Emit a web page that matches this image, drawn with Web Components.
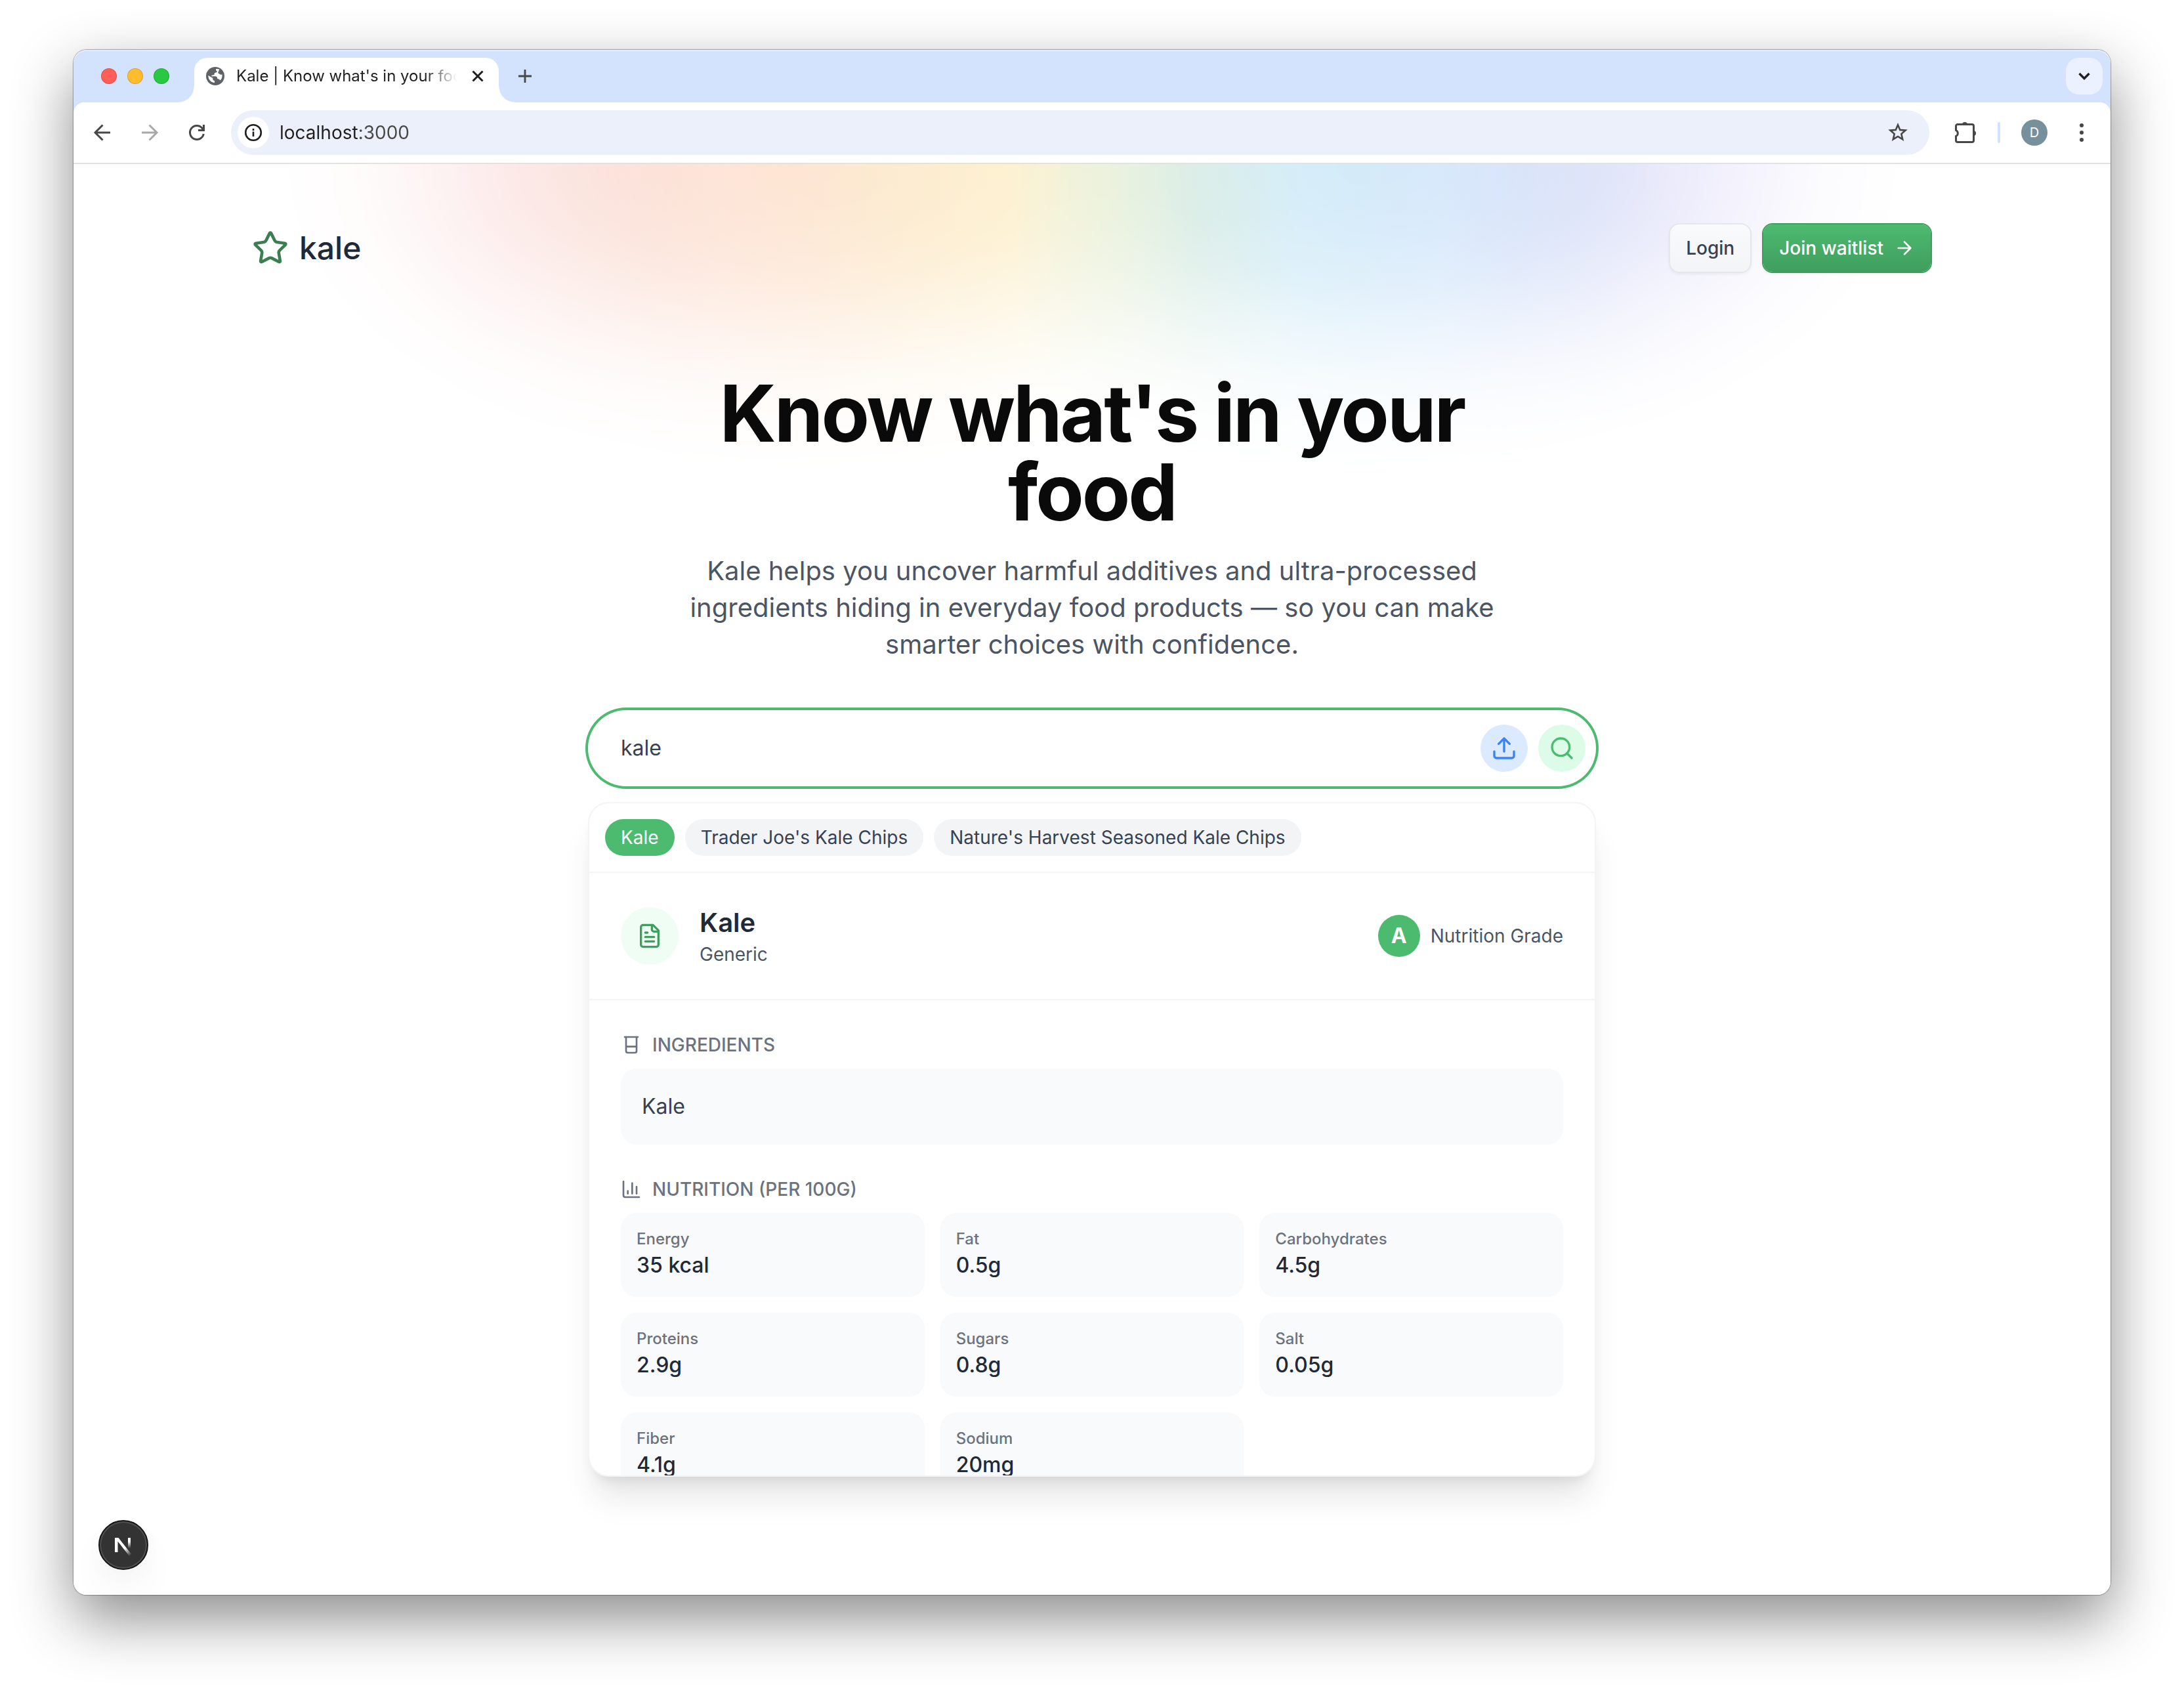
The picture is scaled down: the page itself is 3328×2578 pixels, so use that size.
<!DOCTYPE html>
<html lang="en">
<head>
<meta charset="utf-8">
<title>Kale | Know what's in your food</title>
<style>
  html, body { margin: 0; background: #fff; }
  body { font-family: Inter, "Liberation Sans", sans-serif; color: #1f2937; }
</style>
</head>
<body>
<browser-window>
  <tab-strip slot="tabs">Kale | Know what's in your food</tab-strip>
  <browser-toolbar slot="toolbar" url="localhost:3000" initial="D"></browser-toolbar>
  <kale-page></kale-page>
</browser-window>

<script>
const define = (name, html, setup) => {
  const template = document.createElement('template');
  template.innerHTML = html;
  customElements.define(name, class extends HTMLElement {
    constructor() {
      super();
      this.attachShadow({ mode: 'open' }).append(template.content.cloneNode(true));
    }
    connectedCallback() {
      if (setup) setup(this, this.shadowRoot);
    }
  });
};

const line = (body, width = 2) =>
  `<svg viewBox="0 0 24 24" fill="none" stroke="currentColor" stroke-width="${width}" stroke-linecap="round" stroke-linejoin="round">${body}</svg>`;
const sharp = (size, body, width) =>
  `<svg viewBox="0 0 ${size} ${size}" fill="none" stroke="currentColor" stroke-width="${width}">${body}</svg>`;

const ICONS = {
  star: line('<path d="M11.525 2.295a.53.53 0 0 1 .95 0l2.31 4.679a2.123 2.123 0 0 0 1.595 1.16l5.166.756a.53.53 0 0 1 .294.904l-3.736 3.638a2.123 2.123 0 0 0-.611 1.878l.882 5.14a.53.53 0 0 1-.771.56l-4.618-2.428a2.122 2.122 0 0 0-1.973 0L6.396 21.01a.53.53 0 0 1-.77-.56l.881-5.139a2.122 2.122 0 0 0-.611-1.879L2.16 9.795a.53.53 0 0 1 .294-.906l5.165-.755a2.122 2.122 0 0 0 1.597-1.16z"/>'),
  arrow: line('<path d="M5 12h14M12 5l7 7-7 7"/>'),
  upload: line('<path d="M21 15v4a2 2 0 0 1-2 2H5a2 2 0 0 1-2-2v-4M17 8l-5-5-5 5M12 3v12"/>'),
  search: line('<circle cx="11" cy="11" r="8"/><path d="M21 21l-4.35-4.35"/>'),
  file: line('<path d="M15 2H6a2 2 0 0 0-2 2v16a2 2 0 0 0 2 2h12a2 2 0 0 0 2-2V7Z"/><path d="M14 2v4a2 2 0 0 0 2 2h4M10 9H8M16 13H8M16 17H8"/>'),
  beaker: line('<path d="M4.5 3h15M6 3v16a2 2 0 0 0 2 2h8a2 2 0 0 0 2-2V3M6 14h12"/>'),
  chart: line('<path d="M3 3v16a2 2 0 0 0 2 2h16M18 17V9M13 17V5M8 17v-3"/>'),
  back: sharp(32, '<path d="M28 16H6M16.5 4.5L5 16l11.5 11.5"/>', 3),
  forward: sharp(32, '<path d="M4 16h22M15.5 4.5L27 16l-11.5 11.5"/>', 3),
  reload: sharp(32, '<path d="M26.3 18A10.500 10.500 0 1 1 24 9.200l2 2.300"/><path d="M26.500 4v8.500H18"/>', 3),
  info: sharp(32, '<circle cx="16" cy="16" r="11.800"/><path d="M16 14.500v7.500M16 10v3"/>', 2.6),
  bookmark: sharp(32, '<path d="M16 4.200l3.300 7.700 8.300.7-6.300 5.500 1.900 8.100-7.200-4.300-7.200 4.300 1.900-8.100-6.300-5.500 8.300-.7z"/>', 2.6),
  puzzle: '<svg viewBox="0 0 36 36"><path d="M4.500 8a2.500 2.500 0 0 1 2.500-2.500h22a2.500 2.500 0 0 1 2.500 2.500v22a2.500 2.500 0 0 1-2.500 2.500H7A2.500 2.500 0 0 1 4.500 30v-6.500a5 5 0 0 0 0-9z" fill="none" stroke="currentColor" stroke-width="3"/><path d="M14 6a4 4 0 0 1 8 0zM31 15a4 4 0 0 1 0 8z" fill="currentColor"/></svg>',
  dots: '<svg viewBox="0 0 32 32" fill="currentColor"><circle cx="16" cy="5" r="3"/><circle cx="16" cy="16" r="3"/><circle cx="16" cy="27" r="3"/></svg>',
  chevron: sharp(32, '<path d="M8.500 12l7.500 7.500 7.500-7.500"/>', 3.4),
  close: sharp(32, '<path d="M8.500 8.500l15 15M23.500 8.500l-15 15"/>', 3),
  plus: sharp(32, '<path d="M16 6v20M6 16h20"/>', 2.8),
  globe: '<svg viewBox="0 0 28 28"><circle cx="14" cy="14" r="14" fill="#5f6368"/><path d="M15.500 3.500c-1 1-.500 2.500.800 3.200 1 .600.400 2-1.200 2.300-1.600.200-2.600.800-2.400 2.300.200 1.400-1.200 1.700-2.700 1.600-1.400 0-2 .800-1.600 1.800H14c1.800 0 3 1.200 3 2.600 0 1.300.800 1.600 2.200 1.600 1.200 0 1.400 1 2.100 2.200 2.200-1.800 3.300-4.400 3.300-7.200 0-.800-.100-1.500-.200-2.100-1.200.900-2.800.700-3.800-.500-.800-1-2.300-.600-2.400-2 0-1.200 1.200-1.500 1.200-2.900 0-1.300 1.200-1.800 1.200-2.200-1.500-.900-3.300-.900-5.100-.700zM3.400 13.400c-.200 4.700 2.600 9 7 10.700 1.100.400 1.900.500 2.600.500v-3.100c-1.700 0-2.700-1-2.700-2.700v-1.200z" fill="#fff" transform="translate(0 -.5)"/></svg>',
};

define('ui-icon', `
  <style>
    :host { display: block; flex: none; width: var(--icon-size, 32px); height: var(--icon-size, 32px); }
    svg { display: block; width: 100%; height: 100%; }
  </style>`,
  (el, root) => {
    if (!root.querySelector('svg')) root.innerHTML += ICONS[el.getAttribute('name')] || '';
  });

define('browser-window', `
  <style>
    :host { display: block; box-sizing: border-box; min-height: 100vh; padding: 76px 112px 148px; overflow: hidden; }
    .frame { display: flex; flex-direction: column; min-height: calc(100vh - 224px); border-radius: 20px; background: #fff;
      box-shadow: 0 0 1px 1px rgba(0,0,0,.3), 0 36px 92px rgba(0,0,0,.46); }
    .bar { border-radius: 20px 20px 0 0; background: #d3e2fd; box-shadow: inset 0 2px 0 rgba(255,255,255,.35); }
    .view { display: flex; flex: 1; flex-direction: column; border-radius: 0 0 20px 20px; overflow: hidden; }
  </style>
  <div class="frame">
    <div class="bar"><slot name="tabs"></slot><slot name="toolbar"></slot></div>
    <div class="view"><slot></slot></div>
  </div>`);

define('tab-strip', `
  <style>
    :host { display: flex; align-items: flex-end; height: 80px; padding: 0 12px 0 42px; }
    button { display: grid; place-items: center; padding: 0; border: 0; background: none; color: #1f1f1f; }
    .lights { display: flex; align-self: center; gap: 16px; margin-right: 38px; }
    .lights button { width: 24px; height: 24px; border-radius: 50%; background: var(--c); box-shadow: inset 0 0 0 1px rgba(0,0,0,.14); }
    .tab { position: relative; display: flex; align-items: center; box-sizing: border-box; width: 464px; height: 68px; padding: 0 16px 12px 18px; border-radius: 20px 20px 0 0; background: #fff; }
    .tab::before, .tab::after { content: ""; position: absolute; bottom: 0; width: 24px; height: 24px; }
    .tab::before { right: 100%; background: radial-gradient(circle at 0 0, transparent 23px, #fff 24px); }
    .tab::after { left: 100%; background: radial-gradient(circle at 100% 0, transparent 23px, #fff 24px); }
    .title { flex: 1; margin-left: 18px; overflow: hidden; white-space: nowrap; font-size: 24px; line-height: 32px; color: #1f1f1f;
      -webkit-mask: linear-gradient(90deg, #000 calc(100% - 48px), transparent); mask: linear-gradient(90deg, #000 calc(100% - 48px), transparent); }
    .tab button { margin-left: 16px; --icon-size: 32px; }
    .plus { align-self: center; margin-left: 24px; color: #474747; }
    .list { align-self: center; width: 56px; height: 56px; margin-left: auto; border-radius: 20px; background: #ebf1fe; }
    .fav { --icon-size: 28px; }
  </style>
  <div class="lights">
    <button aria-label="Close window" style="--c:#ff5f57"></button>
    <button aria-label="Minimize window" style="--c:#febc2e"></button>
    <button aria-label="Zoom window" style="--c:#28c840"></button>
  </div>
  <div class="tab">
    <ui-icon class="fav" name="globe"></ui-icon>
    <span class="title"><slot></slot></span>
    <button aria-label="Close tab"><ui-icon name="close"></ui-icon></button>
  </div>
  <button class="plus" aria-label="New tab"><ui-icon name="plus"></ui-icon></button>
  <button class="list" aria-label="Search tabs"><ui-icon name="chevron"></ui-icon></button>`);

define('browser-toolbar', `
  <style>
    :host { display: flex; align-items: center; box-sizing: border-box; height: 94px; padding: 0 28px; border-bottom: 2px solid #e1e3e1; border-radius: 16px 16px 0 0; background: #fff; color: #474747; }
    button { display: grid; place-items: center; padding: 0; border: 0; background: none; color: inherit; font: inherit; }
    .nav { display: flex; gap: 40px; }
    .nav [disabled] { color: #a9a9a9; }
    .address { display: flex; flex: 1; align-items: center; height: 68px; margin: 0 36px; padding: 0 32px 0 10px; border-radius: 34px; background: #ecf0fa; }
    .info { width: 48px; height: 48px; border-radius: 50%; background: #fff; color: #1f1f1f; }
    input { flex: 1; min-width: 0; margin: 0 16px; padding: 0; border: 0; outline: 0; font: 28px/36px Inter, "Liberation Sans", sans-serif; color: #1f1f1f;
      background: linear-gradient(90deg, #1f1f1f 122px, #474747 122px); -webkit-background-clip: text; background-clip: text; -webkit-text-fill-color: transparent; }
    .puzzle { --icon-size: 36px; }
    .rule { width: 4px; height: 32px; margin: 0 32px; border-radius: 2px; background: #d3e2fd; }
    .avatar { width: 40px; height: 40px; margin-right: 36px; border-radius: 50%; background: #78909c; color: #fff; font-size: 20px; }
  </style>
  <div class="nav">
    <button aria-label="Back"><ui-icon name="back"></ui-icon></button>
    <button aria-label="Forward" disabled><ui-icon name="forward"></ui-icon></button>
    <button aria-label="Reload"><ui-icon name="reload"></ui-icon></button>
  </div>
  <div class="address">
    <button class="info" aria-label="Site information"><ui-icon name="info"></ui-icon></button>
    <input type="text" aria-label="Address">
    <button aria-label="Bookmark"><ui-icon name="bookmark"></ui-icon></button>
  </div>
  <button class="puzzle" aria-label="Extensions"><ui-icon name="puzzle"></ui-icon></button>
  <span class="rule"></span>
  <button class="avatar"></button>
  <button aria-label="Menu"><ui-icon name="dots"></ui-icon></button>`,
  (el, root) => {
    root.querySelector('input').value = el.getAttribute('url');
    root.querySelector('.avatar').textContent = el.getAttribute('initial');
  });

define('kale-page', `
  <style>
    :host { position: relative; display: flex; flex: 1; flex-direction: column; padding: 90px 32px 0; background: #fff;
      --fade: #000, rgba(0,0,0,.96) 12%, rgba(0,0,0,.86) 26%, rgba(0,0,0,.7) 40%, rgba(0,0,0,.48) 53%, rgba(0,0,0,.24) 68%, rgba(0,0,0,.07) 84%, transparent; }
    .glow { position: absolute; inset: 0 0 auto; height: 480px;
      background: linear-gradient(90deg, #f8c8c8 19%, #f9d7ce 25%, #fde3d5 32%, #fde6d3 36%, #fcedc5 46%, #e2edd0 51%, #d2e9e1 55%, #d3ecf8 60%, #d6e8fb 67%, #cfd5f5 76%, #d0caf5 82%);
      -webkit-mask: radial-gradient(ellipse 26% 470px at 36% 0, var(--fade)), radial-gradient(ellipse 26% 470px at 64% 0, var(--fade));
      mask: radial-gradient(ellipse 26% 470px at 36% 0, var(--fade)), radial-gradient(ellipse 26% 470px at 64% 0, var(--fade)); }
    .content { position: relative; display: flex; flex-direction: column; width: 100%; max-width: 2560px; margin: 0 auto; }
    kale-hero { margin: 154px auto 72px; }
    food-search { margin-bottom: 24px; }
    dev-badge { position: absolute; left: 38px; bottom: 38px; }
  </style>
  <div class="glow"></div>
  <div class="content">
    <kale-header></kale-header>
    <kale-hero>
      <span slot="title">Know what's in your food</span>
      Kale helps you uncover harmful additives and ultra-processed ingredients hiding in everyday food products — so you can make smarter choices with confidence.
    </kale-hero>
    <food-search value="kale"></food-search>
    <food-result></food-result>
  </div>
  <dev-badge></dev-badge>`);

define('kale-header', `
  <style>
    :host { display: flex; align-items: center; justify-content: space-between; }
    a { display: flex; align-items: center; gap: 16px; color: #1f2937; text-decoration: none; font-size: 48px; font-weight: 500; line-height: 64px; }
    a ui-icon { --icon-size: 56px; color: #3b7f50; }
    nav { display: flex; gap: 16px; }
  </style>
  <a href="#home"><ui-icon name="star"></ui-icon>kale</a>
  <nav>
    <kale-button>Login</kale-button>
    <kale-button variant="primary">Join waitlist<ui-icon slot="end" name="arrow"></ui-icon></kale-button>
  </nav>`);

define('kale-button', `
  <style>
    :host { display: block; }
    button { display: flex; align-items: center; gap: 16px; box-sizing: border-box; height: 76px; padding: 0 24px; border: 2px solid #e5e7eb; border-radius: 16px;
      background: linear-gradient(#f9fafb, #f3f4f6) padding-box; box-shadow: 0 2px 4px rgba(0,0,0,.05); color: #374151; font: 500 28px/40px Inter, "Liberation Sans", sans-serif; }
    :host([variant="primary"]) button { border-color: #3f9e5e; background: linear-gradient(#4cba6f, #409e5e) padding-box; color: #fff; }
  </style>
  <button><slot></slot><slot name="end"></slot></button>`);

define('kale-hero', `
  <style>
    :host { display: block; max-width: 1280px; text-align: center; }
    h1 { margin: 0 0 32px; color: #0a0a0a; font-size: 120px; font-weight: 700; line-height: 120px; letter-spacing: -0.025em; }
    p { margin: 0; color: #4b5563; font-size: 40px; line-height: 56px; }
  </style>
  <h1><slot name="title"></slot></h1>
  <p><slot></slot></p>`);

define('food-search', `
  <style>
    :host { display: block; width: 100%; max-width: 1536px; margin-inline: auto; }
    form { display: flex; align-items: center; gap: 16px; box-sizing: border-box; height: 116px; padding: 0 16px 0 50px; border-radius: 58px; background: #fff; box-shadow: 0 0 0 4px #4cba6f; }
    input { flex: 1; min-width: 0; padding: 0; border: 0; outline: 0; background: none; color: #374151; font: 32px/48px Inter, "Liberation Sans", sans-serif; }
    button { display: grid; place-items: center; width: 72px; height: 72px; padding: 0; border: 0; border-radius: 50%; --icon-size: 40px; }
    .upload { background: #dbeafe; color: #3b82f6; }
    .search { background: #dcfce7; color: #4cba6f; }
  </style>
  <form>
    <input type="text" aria-label="Search for a food">
    <button class="upload" type="button" aria-label="Upload"><ui-icon name="upload"></ui-icon></button>
    <button class="search" type="button" aria-label="Search"><ui-icon name="search"></ui-icon></button>
  </form>`,
  (el, root) => { root.querySelector('input').value = el.getAttribute('value'); });

define('food-chip', `
  <style>
    :host { display: block; }
    button { display: block; padding: 8px 24px; border: 0; border-radius: 28px; background: #f3f4f6; color: #374151; font: 28px/40px Inter, "Liberation Sans", sans-serif; }
    :host([selected]) button { background: #4cba6f; color: #fff; }
  </style>
  <button><slot></slot></button>`);

define('food-section', `
  <style>
    :host { display: block; }
    h3 { display: flex; align-items: center; gap: 16px; margin: 0 0 16px; color: #6b7280; font-size: 28px; font-weight: 500; line-height: 40px; }
  </style>
  <h3><slot name="icon"></slot><slot name="title"></slot></h3>
  <slot></slot>`);

define('nutrition-fact', `
  <style>
    :host { display: block; padding: 24px; border-radius: 24px; background: #f9fafb; font-weight: 500; }
    .label { color: #6b7280; font-size: 24px; line-height: 32px; }
    .value { color: #1f2937; font-size: 32px; line-height: 48px; }
  </style>
  <div class="label"></div>
  <div class="value"><slot></slot></div>`,
  (el, root) => { root.querySelector('.label').textContent = el.getAttribute('label'); });

define('food-result', `
  <style>
    :host { display: block; box-sizing: border-box; width: 100%; max-width: 1536px; max-height: 1028px; margin: 0 auto; overflow: hidden; border: 2px solid #f3f4f6; border-radius: 32px; background: #fff;
      box-shadow: 0 40px 50px -10px rgba(0,0,0,.1), 0 16px 20px -12px rgba(0,0,0,.1); }
    .chips { display: flex; gap: 16px; padding: 24px; border-bottom: 2px solid #f3f4f6; }
    .head { display: flex; align-items: center; gap: 32px; padding: 48px; border-bottom: 2px solid #f3f4f6; }
    .disc { display: grid; place-items: center; width: 88px; height: 88px; border-radius: 50%; background: #f0fdf4; color: #409e5e; --icon-size: 40px; }
    h2 { margin: 0; color: #1f2937; font-size: 40px; font-weight: 600; line-height: 56px; }
    p { margin: 0; color: #4b5563; font-size: 28px; line-height: 40px; }
    .grade { display: flex; align-items: center; gap: 16px; margin-left: auto; color: #4b5563; font-size: 28px; line-height: 40px; }
    .grade b { display: grid; place-items: center; width: 64px; height: 64px; border-radius: 50%; background: #4cba6f; color: #fff; font-size: 32px; font-weight: 700; }
    .body { display: grid; gap: 48px; padding: 48px; }
    .box { padding: 32px; border-radius: 24px; background: #f9fafb; color: #374151; font-size: 32px; line-height: 52px; }
    .facts { display: grid; grid-template-columns: repeat(3, 1fr); gap: 24px; }
  </style>
  <div class="chips">
    <food-chip selected>Kale</food-chip>
    <food-chip>Trader Joe's Kale Chips</food-chip>
    <food-chip>Nature's Harvest Seasoned Kale Chips</food-chip>
  </div>
  <div class="head">
    <div class="disc"><ui-icon name="file"></ui-icon></div>
    <div><h2>Kale</h2><p>Generic</p></div>
    <div class="grade"><b>A</b><span>Nutrition Grade</span></div>
  </div>
  <div class="body">
    <food-section>
      <ui-icon slot="icon" name="beaker"></ui-icon><span slot="title">INGREDIENTS</span>
      <div class="box">Kale</div>
    </food-section>
    <food-section>
      <ui-icon slot="icon" name="chart"></ui-icon><span slot="title">NUTRITION (PER 100G)</span>
      <div class="facts">
        <nutrition-fact label="Energy">35 kcal</nutrition-fact>
        <nutrition-fact label="Fat">0.5g</nutrition-fact>
        <nutrition-fact label="Carbohydrates">4.5g</nutrition-fact>
        <nutrition-fact label="Proteins">2.9g</nutrition-fact>
        <nutrition-fact label="Sugars">0.8g</nutrition-fact>
        <nutrition-fact label="Salt">0.05g</nutrition-fact>
        <nutrition-fact label="Fiber">4.1g</nutrition-fact>
        <nutrition-fact label="Sodium">20mg</nutrition-fact>
      </div>
    </food-section>
  </div>`);

define('dev-badge', `
  <style>
    :host { display: block; }
    button { display: grid; place-items: center; width: 76px; height: 76px; padding: 0; border: 2px solid #171717; border-radius: 50%; background: #333;
      box-shadow: inset 0 0 0 2px #505050, 0 32px 64px -16px rgba(0,0,0,.12), 0 8px 48px rgba(0,0,0,.02); }
    svg { display: block; width: 40px; height: 40px; }
  </style>
  <button aria-label="Open developer tools">
    <svg viewBox="0 0 40 40" fill="none">
      <defs>
        <linearGradient id="stem" x1="0" y1="8" x2="0" y2="25" gradientUnits="userSpaceOnUse"><stop offset=".4" stop-color="#fff"/><stop offset="1" stop-color="#fff" stop-opacity="0"/></linearGradient>
        <linearGradient id="slash" x1="22" y1="25" x2="31" y2="36" gradientUnits="userSpaceOnUse"><stop stop-color="#fff"/><stop offset="1" stop-color="#fff" stop-opacity="0"/></linearGradient>
      </defs>
      <path d="M7 9h5.500L33 35l-3.500 2.500L11.500 14.500V31H7z" fill="url(#slash)"/>
      <path d="M27 9h4v16h-4z" fill="url(#stem)"/>
    </svg>
  </button>`);
</script>
</body>
</html>
